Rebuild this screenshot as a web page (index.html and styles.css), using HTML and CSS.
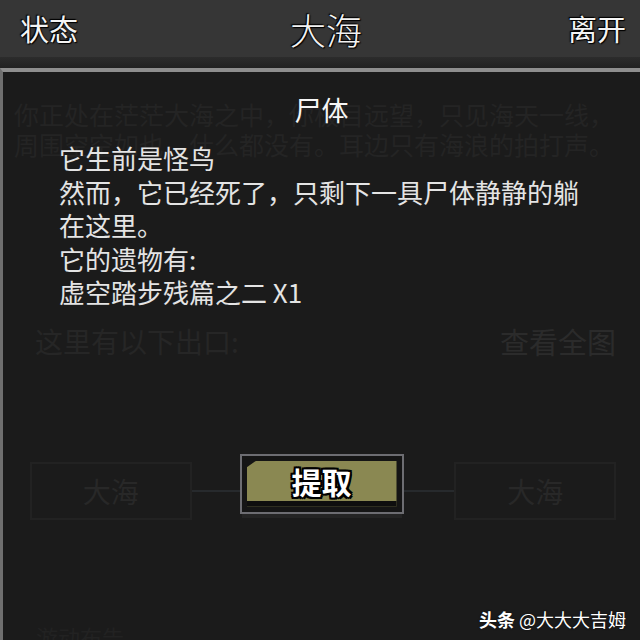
FILE: index.html
```html
<!DOCTYPE html>
<html lang="zh-CN">
<head>
    <meta charset="UTF-8">
    <meta name="viewport" content="width=device-width, initial-scale=1.0">
    <title>大海</title>
    <link rel="stylesheet" href="styles.css">
</head>
<body>
    <header class="topbar">
        <span class="topbar-btn">状态</span>
        <span class="topbar-title">大海</span>
        <span class="topbar-btn">离开</span>
    </header>
    <div class="strip"></div>

    <main class="frame">
        <!-- scene behind the dialog, dimmed -->
        <div class="scene">
            <p class="scene-desc">你正处在茫茫大海之中，你极目远望，只见海天一线，周围空空如也，什么都没有。耳边只有海浪的拍打声。</p>
            <div class="exits-head">
                <span>这里有以下出口:</span>
                <span>查看全图</span>
            </div>
            <div class="exits">
                <div class="exit">大海</div>
                <div class="exit-line"></div>
                <div class="exit-gap"></div>
                <div class="exit-line"></div>
                <div class="exit">大海</div>
            </div>
            <p class="scene-more">游动布告</p>
        </div>

        <div class="dialog">
            <h2 class="dialog-title">尸体</h2>
            <div class="dialog-body">
                <p>它生前是怪鸟</p>
                <p>然而，它已经死了，只剩下一具尸体静静的躺在这里。</p>
                <p>它的遗物有:</p>
                <p>虚空踏步残篇之二 X1</p>
            </div>
            <div class="dialog-actions">
                <button class="take-btn"><span class="take-fill">提取</span></button>
            </div>
        </div>

        <div class="watermark"><b>头条</b> @大大大吉姆</div>
    </main>
</body>
</html>
```

FILE: styles.css
```css
* {
    box-sizing: border-box;
}

body {
    margin: 0;
    height: 640px;
    overflow: hidden;
    background: #1b1b1b;
    font-family: "Noto Sans CJK SC", "Noto Sans", sans-serif;
    color: #e8e8e8;
}

p {
    margin: 0;
}

.topbar {
    height: 57px;
    background: #363636;
    display: flex;
    align-items: center;
    justify-content: space-between;
    padding: 0 14px 0 20px;
}

.topbar-btn {
    font-size: 29px;
    line-height: 1;
    color: #f4f4f4;
    text-shadow: 0 0 2px #000, 1px 1px 1px #000, -1px -1px 1px #000;
}

.topbar-title {
    font-size: 36px;
    font-weight: 300;
    line-height: 1;
    color: #f2f2f2;
    text-shadow: 0 0 2px #000, 1px 1px 1px #000, -1px -1px 1px #000;
    margin-left: 6px;
}

.strip {
    height: 11px;
    background: linear-gradient(#2c2c2c, #212121);
}

.frame {
    position: relative;
    height: 572px;
    border-top: 4px solid #8e8e8e;
    border-left: 3px solid #6f6f6f;
    background: #1b1b1b;
}

/* dimmed scene */
.scene {
    padding: 27px 24px 0 11px;
    color: #242424;
}

.scene-desc {
    font-size: 25px;
    line-height: 30px;
}

.exits-head {
    display: flex;
    justify-content: space-between;
    margin-top: 167px;
    padding-left: 21px;
    font-size: 28px;
    line-height: 30px;
    color: #262626;
}

.exits-head span:last-child {
    font-size: 29px;
    color: #2b2b2b;
}

.exits {
    display: flex;
    align-items: center;
    margin-top: 106px;
    padding-left: 16px;
}

.exit {
    width: 162px;
    height: 58px;
    border: 2px solid #222;
    display: flex;
    align-items: center;
    justify-content: center;
    font-size: 28px;
    color: #282828;
}

.exit-line {
    width: 50px;
    height: 2px;
    background: #272a2d;
}

.exit-gap {
    width: 163px;
}

.scene-more {
    margin-top: 100px;
    padding-left: 22px;
    font-size: 22px;
    color: #222;
}

/* corpse dialog over the scene */
.dialog {
    position: absolute;
    top: 0;
    left: 0;
    right: 0;
    padding: 21px 0 0 56px;
}

.dialog-title {
    margin: 0 0 14px -56px;
    text-align: center;
    font-size: 27px;
    font-weight: 400;
    line-height: 34px;
    color: #f6f6f6;
}

.dialog-body {
    width: 530px;
    font-size: 26px;
    line-height: 33.5px;
    color: #e4e4e4;
}

.dialog-actions {
    display: flex;
    justify-content: center;
    margin: 145px 0 0 -56px;
}

.take-btn {
    width: 164px;
    height: 60px;
    padding: 5px;
    border: 2px solid #6d6d72;
    background: #151515;
    box-shadow: 0 6px 0 -2px #242424;
    font-family: inherit;
    cursor: pointer;
}

.take-fill {
    display: flex;
    align-items: center;
    justify-content: center;
    height: 100%;
    background: #8a8852;
    border-bottom: 6px solid #0e0e0e;
    clip-path: polygon(10px 0, 100% 0, 100% 100%, 0 100%, 0 7px);
    font-size: 30px;
    font-weight: 700;
    color: #fff;
    text-shadow:
        2px 0 0 #000, -2px 0 0 #000, 0 2px 0 #000, 0 -2px 0 #000,
        2px 2px 0 #000, -2px -2px 0 #000, 2px -2px 0 #000, -2px 2px 0 #000;
}

.watermark {
    position: absolute;
    right: 14px;
    bottom: 8px;
    font-size: 18px;
    color: #fff;
    text-shadow: 0 0 2px rgba(0, 0, 0, 0.6);
}

.watermark b {
    font-weight: 700;
}
```
